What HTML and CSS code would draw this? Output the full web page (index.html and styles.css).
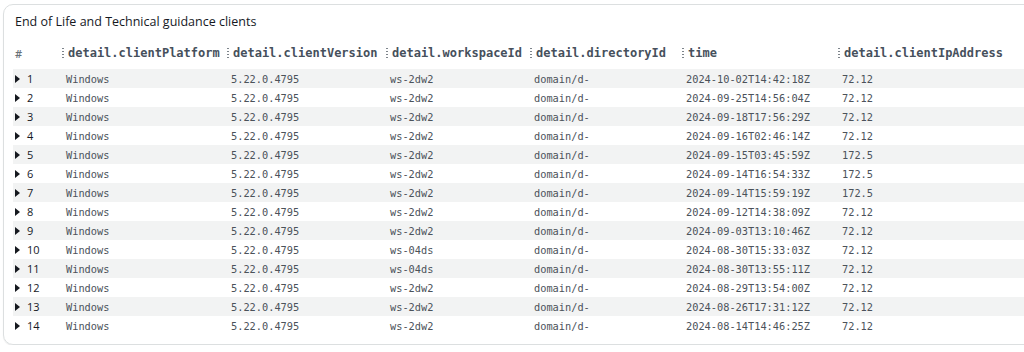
FILE: index.html
```html
<!DOCTYPE html>
<html>
<head>
  <title>End of Life clients</title>
  <link rel="stylesheet" href="styles.css">
</head>
<body>

<div class="panel">
  <h2 class="title">End of Life and Technical guidance clients</h2>

  <div class="grid head">
    <div class="hcell first">#</div>
    <div class="hcell"><span class="grip"></span>detail.clientPlatform</div>
    <div class="hcell"><span class="grip"></span>detail.clientVersion</div>
    <div class="hcell"><span class="grip"></span>detail.workspaceId</div>
    <div class="hcell"><span class="grip"></span>detail.directoryId</div>
    <div class="hcell"><span class="grip"></span>time</div>
    <div class="hcell"><span class="grip"></span>detail.clientIpAddress</div>
  </div>

  <div id="rows"></div>
</div>

<script>
  // rows of the query result
  const rows = [
    ['1', 'ws-2dw2', '2024-10-02T14:42:18Z', '72.12'],
    ['2', 'ws-2dw2', '2024-09-25T14:56:04Z', '72.12'],
    ['3', 'ws-2dw2', '2024-09-18T17:56:29Z', '72.12'],
    ['4', 'ws-2dw2', '2024-09-16T02:46:14Z', '72.12'],
    ['5', 'ws-2dw2', '2024-09-15T03:45:59Z', '172.5'],
    ['6', 'ws-2dw2', '2024-09-14T16:54:33Z', '172.5'],
    ['7', 'ws-2dw2', '2024-09-14T15:59:19Z', '172.5'],
    ['8', 'ws-2dw2', '2024-09-12T14:38:09Z', '72.12'],
    ['9', 'ws-2dw2', '2024-09-03T13:10:46Z', '72.12'],
    ['10', 'ws-04ds', '2024-08-30T15:33:03Z', '72.12'],
    ['11', 'ws-04ds', '2024-08-30T13:55:11Z', '72.12'],
    ['12', 'ws-2dw2', '2024-08-29T13:54:00Z', '72.12'],
    ['13', 'ws-2dw2', '2024-08-26T17:31:12Z', '72.12'],
    ['14', 'ws-2dw2', '2024-08-14T14:46:25Z', '72.12']
  ];

  const box = document.getElementById('rows');
  rows.forEach(r => {
    const row = document.createElement('div');
    row.className = 'grid row';
    row.innerHTML =
      `<div class="num"><span class="arrow"></span>${r[0]}</div>` +
      `<div class="cell">Windows</div>` +
      `<div class="cell">5.22.0.4795</div>` +
      `<div class="cell">${r[1]}</div>` +
      `<div class="cell">domain/d-</div>` +
      `<div class="cell">${r[2]}</div>` +
      `<div class="cell">${r[3]}</div>`;
    box.appendChild(row);
  });
</script>

</body>
</html>
```

FILE: styles.css
```css
body {
  margin: 0;
  background: #fff;
  font-family: "Open Sans", "Noto Sans", sans-serif;
  overflow: hidden;
}

.panel {
  margin: 4px 0 0 3px;
  width: 1040px;
  height: 341px;
  border: 1px solid #dcdfe0;
  border-radius: 10px;
  box-shadow: 0 1px 1px rgba(0, 0, 0, 0.08);
  padding: 0 0 0 9px;
  box-sizing: border-box;
}

.title {
  margin: 0;
  padding: 9px 0 0 2px;
  font-size: 12.5px;
  line-height: 16px;
  font-weight: 400;
  color: #16191f;
}

/* shared column widths */
.grid {
  display: grid;
  grid-template-columns: 49px 165px 159px 144px 152px 156px 1fr;
}

.head {
  margin-top: 14px;
  height: 18px;
  margin-bottom: 7px;
}

.hcell {
  display: flex;
  align-items: center;
  font-family: "DejaVu Sans Mono", monospace;
  font-size: 12px;
  font-weight: 600;
  color: #46505c;
  white-space: nowrap;
}

.hcell.first {
  padding-left: 2px;
  font-family: "Open Sans", sans-serif;
  font-size: 11px;
  color: #687078;
}

/* drag handle between columns */
.grip {
  width: 2px;
  height: 13px;
  margin-right: 4px;
  background: radial-gradient(circle, #7d848b 0.9px, transparent 1.1px) 0 0 / 2px 3px repeat-y;
}

.row {
  height: 19px;
  align-items: center;
}

.row:nth-child(odd) {
  background: #f2f3f3;
}

.num {
  display: flex;
  align-items: center;
  padding-left: 2px;
  font-size: 11px;
  color: #16191f;
}

.arrow {
  width: 0;
  height: 0;
  border-top: 4.5px solid transparent;
  border-bottom: 4.5px solid transparent;
  border-left: 5px solid #16191f;
  margin-right: 7px;
}

.cell {
  padding-left: 4px;
  font-family: "DejaVu Sans Mono", monospace;
  font-size: 10.3px;
  color: #4b525a;
  white-space: nowrap;
}
```
